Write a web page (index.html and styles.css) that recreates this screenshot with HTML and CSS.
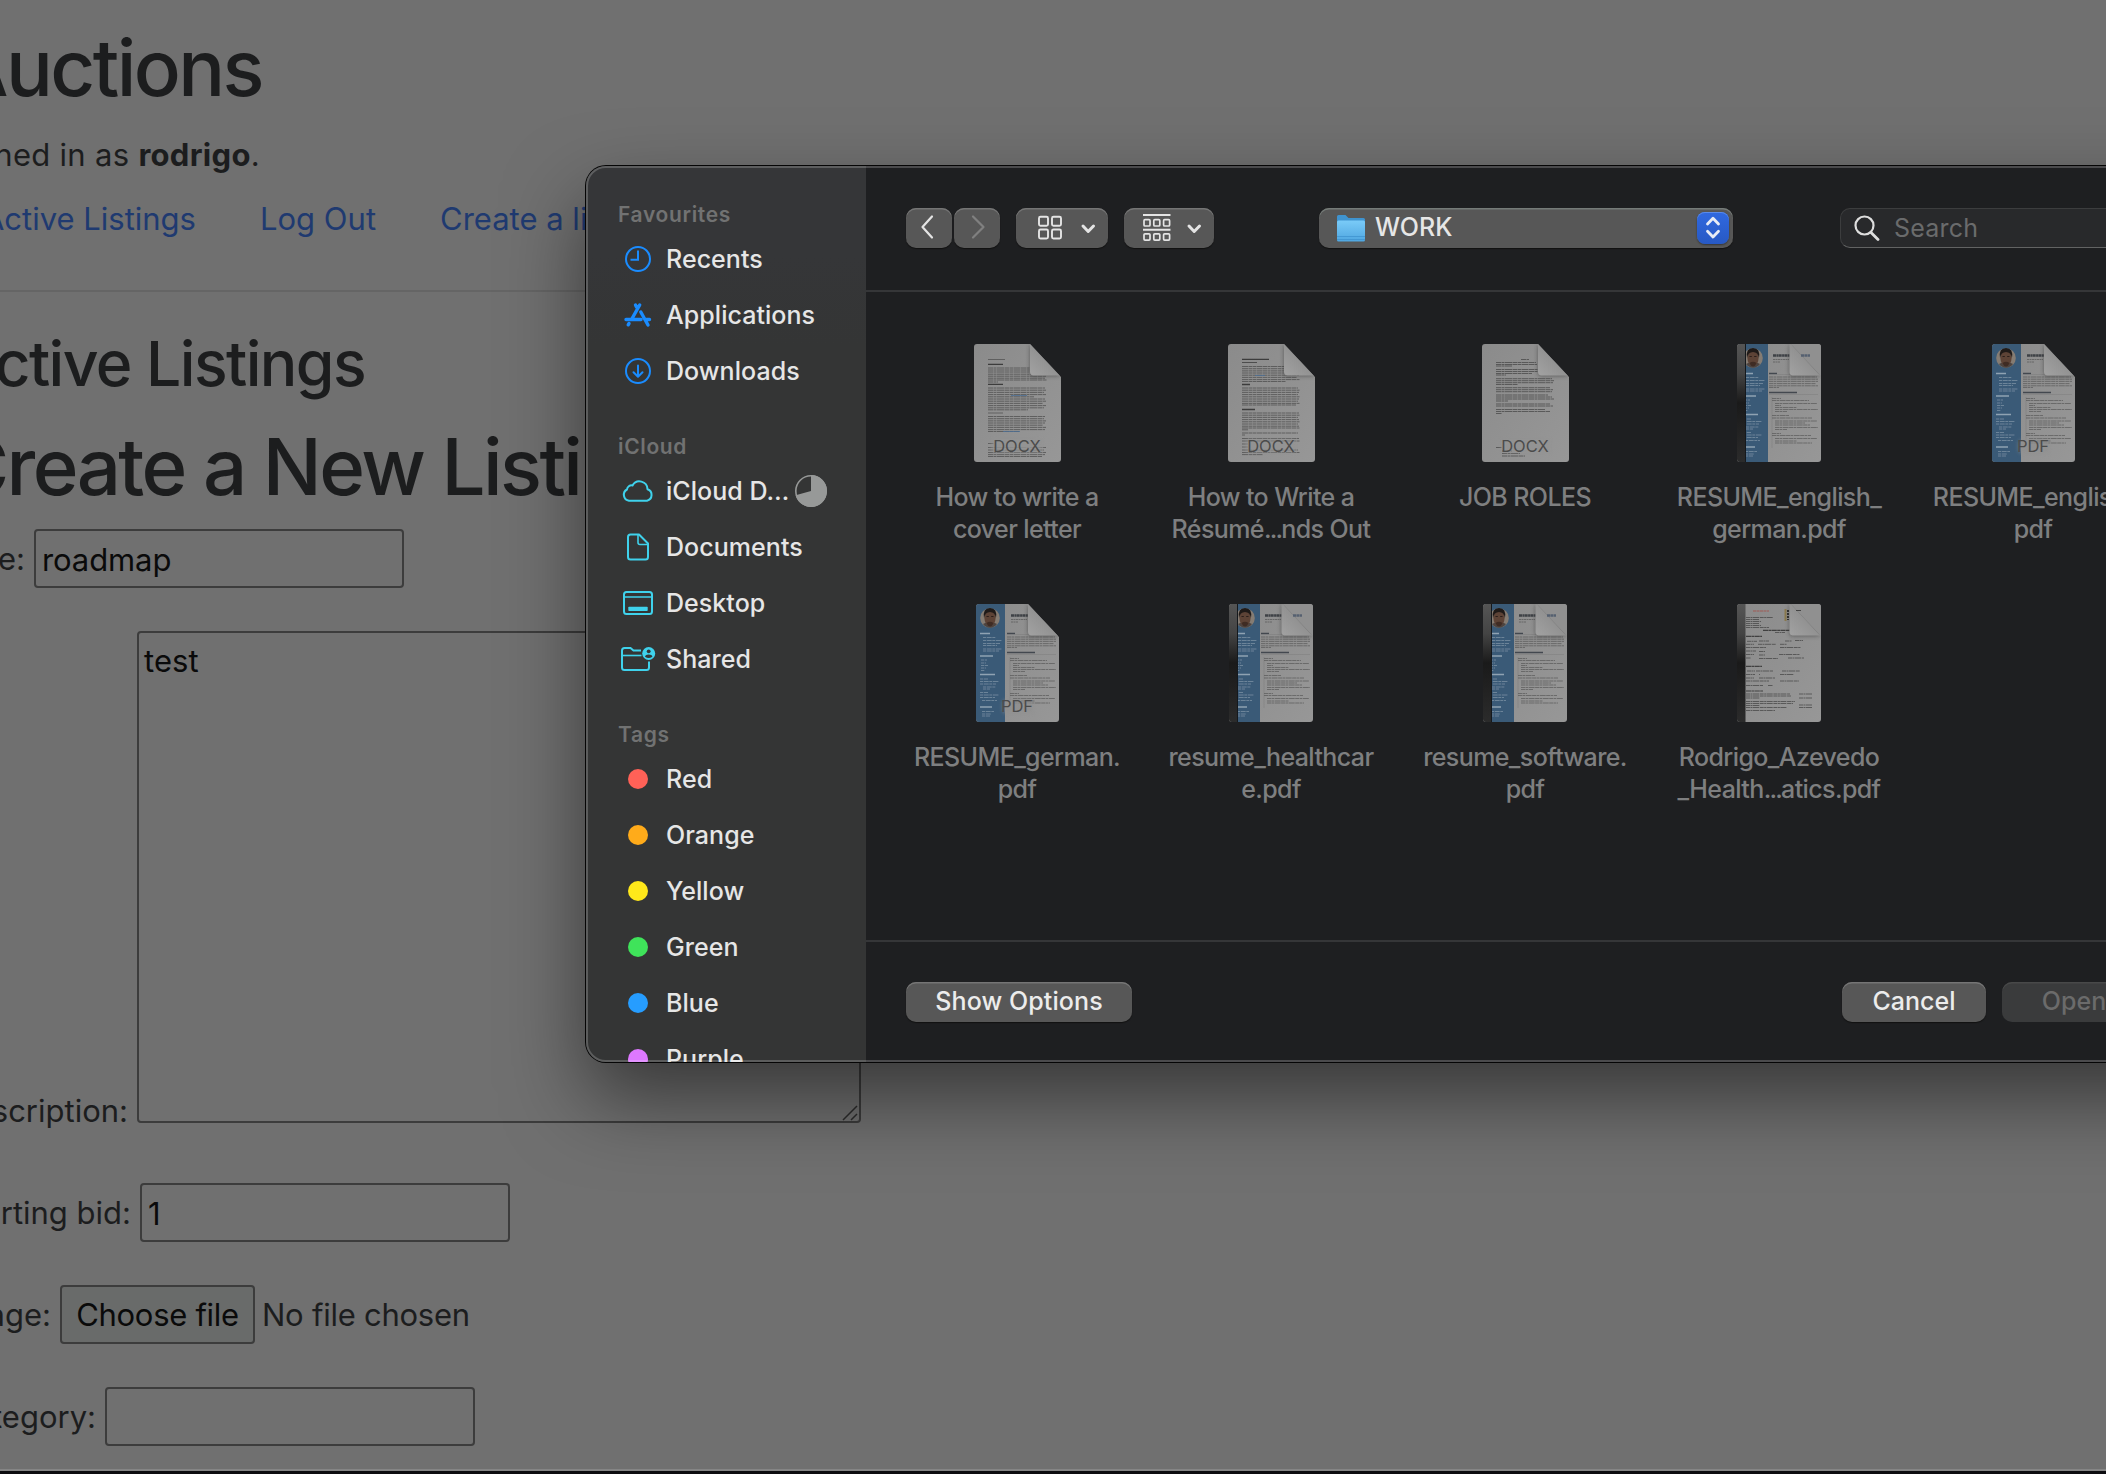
FILE: index.html
```html
<!DOCTYPE html>
<html lang="en">
<head>
<meta charset="utf-8">
<title>Auctions</title>
<link rel="stylesheet" href="styles.css">
</head>
<body>
<svg class="defs" aria-hidden="true">
  <defs>
    <linearGradient id="paper" x1="0" y1="0" x2="1" y2="1"><stop offset="0" stop-color="#8b8b8b"/><stop offset="1" stop-color="#979797"/></linearGradient>
    <linearGradient id="curl" x1="0" y1="1" x2="1" y2="0"><stop offset="0" stop-color="#a2a2a2"/><stop offset=".5" stop-color="#929292"/><stop offset="1" stop-color="#878787"/></linearGradient>
    <linearGradient id="spine" x1="0" y1="0" x2="0" y2="1"><stop offset="0" stop-color="#555"/><stop offset=".25" stop-color="#444"/><stop offset=".5" stop-color="#1a1a1a"/><stop offset="1" stop-color="#2b2b2b"/></linearGradient>
    <linearGradient id="folder" x1="0" y1="0" x2="0" y2="1"><stop offset="0" stop-color="#7acbf8"/><stop offset="1" stop-color="#4fa6e0"/></linearGradient>
    <filter id="soft" x="-30%" y="-30%" width="160%" height="160%"><feGaussianBlur stdDeviation="2"/></filter>
    <clipPath id="cut87"><path d="M3 0H56L87 33V115a3 3 0 0 1-3 3H3a3 3 0 0 1-3-3V3a3 3 0 0 1 3-3z"/></clipPath>
    <clipPath id="cut83"><path d="M3 0H52L83 33V115a3 3 0 0 1-3 3H3a3 3 0 0 1-3-3V3a3 3 0 0 1 3-3z"/></clipPath>
    <clipPath id="round84"><rect width="84" height="118" rx="3"/></clipPath>
  </defs>
  <symbol id="fold" viewBox="0 0 31 33" overflow="visible">
    <path d="M0 0V29q0 3 3 3H31z" fill="#333" opacity=".55" filter="url(#soft)"/>
    <path d="M0 0Q2 0 3 2L30 31Q31 32 29 31.500H3Q0 31 0 28z" fill="url(#curl)"/>
  </symbol>
  <symbol id="resume-side" viewBox="0 0 29 118">
    <rect width="29" height="118" fill="#3a5a77"/>
    <circle cx="14" cy="14" r="9.800" fill="#857c73"/>
    <path d="M7 20Q10 18 14 18T21 20Q18 23.800 14 23.800T7 20z" fill="#4c4441"/>
    <ellipse cx="14" cy="14" rx="5.600" ry="8" fill="#5d4336"/>
    <path d="M8 14Q6.500 4 14 4T20 14Q19 8 14 8T8 14z" fill="#1f1a18"/>
    <path d="M10.500 19Q14 16.500 17.500 19Q16 22.500 14 22.500T10.500 19" fill="#3f2c24"/>
    <path d="M10.500 12.500H12.800M15.200 12.500H17.500" stroke="#2b1f1a"/>
    <g stroke="#8fa2b2" fill="none">
      <path stroke-width="1.400" d="M4 29.500H14M4 52H17M4 70.500H19M4 103H16"/>
      <path stroke-width=".9" opacity=".65" stroke-dasharray="3 .7 5 .6" d="M7 33.500H20M7 36.500H26M7 39.500H24M7 41.500H21M7 45H26M7 47H23M5 56H11M5 59H10M5 61.500H12M5 64H10M5 66.500H9M4 75H12M4 77.500H23M4 80H20M7 83H20M7 85H14M4 88.500H12M4 91H23M4 93.500H19M6 96.500H21M6 107.500H18M6 110H15M6 112H14"/>
    </g>
  </symbol>
  <symbol id="resume-text" viewBox="0 0 54 118">
    <g fill="none">
      <path stroke="#3e4146" stroke-width="2.600" stroke-dasharray="3 .4 2 .3" d="M6 11.500H23"/>
      <path stroke="#666" stroke-width="1" stroke-dasharray="2 .5" d="M6 15.500H22M6 18H13"/>
      <path stroke="#43484f" stroke-width="1.500" d="M2 29.500H10M2 48.500H30"/>
      <path stroke="#777" stroke-width=".4" d="M10 30.500H51M2 50.500H51M5 53V104"/>
      <path stroke="#555" stroke-width="1" opacity=".65" stroke-dasharray="4 .5 2.500 .6 6 .5" d="M2 33H50M2 35.200H51M2 37.400H51M2 39.600H49M2 41.800H51M2 43.500H12M5 54.500H14M5 56.500H42M8 59.500H50M8 61.500H14M8 63.500H30M8 65.500H51M8 67.500H20M5 71.500H22M5 74H45M8 77H50M8 79H38M8 81H43M8 83.500H51M8 85.500H20M5 89.500H14M5 91.500H44M8 94.500H50M8 97H30M8 99H45"/>
    </g>
  </symbol>
  <symbol id="pdf" viewBox="0 0 83 118" overflow="visible">
    <g clip-path="url(#cut83)">
      <rect width="83" height="118" fill="url(#paper)"/>
      <use href="#resume-side" width="29" height="118"/>
      <use href="#resume-text" x="29" width="54" height="118"/>
      <rect x="27" y="96" width="30" height="13" rx="3" fill="#909090" opacity=".75" filter="url(#soft)"/>
      <use href="#fold" x="52" width="31" height="33"/>
    </g>
  </symbol>
  <symbol id="bound-resume" viewBox="0 0 84 118" overflow="visible">
    <g clip-path="url(#round84)">
      <rect width="84" height="118" fill="url(#paper)"/>
      <use href="#resume-side" x="2" width="29" height="118"/>
      <use href="#resume-text" x="30" width="54" height="118"/>
      <use href="#fold" x="52.500" width="31" height="33"/>
      <path d="M54 0H84V32z" fill="#909090"/>
      <path d="M64 11.500H73" stroke="#556070" stroke-width="2.400" stroke-dasharray="3 .4"/>
      <rect width="8.500" height="118" fill="url(#spine)"/>
      <path d="M8.500 0V118" stroke="#15191d"/>
    </g>
  </symbol>
  <symbol id="bound-form" viewBox="0 0 84 118" overflow="visible">
    <g clip-path="url(#round84)">
      <rect width="84" height="118" fill="url(#paper)"/>
      <path d="M16 7H32" stroke="#a05a55" stroke-width="1.200" stroke-dasharray="3 .5"/>
      <path d="M48.500 5V17" stroke="#8b7a4e" stroke-width="2"/><path d="M51 6V16" stroke="#333" stroke-width="2" stroke-dasharray="2 1"/>
      <g stroke="#333" fill="none">
        <path stroke-width="1.200" opacity=".85" stroke-dasharray="5 .4 3 .4" d="M26 26.300H53M9 32.300H25M9 62.300H25M9 87H26"/>
        <path stroke-width=".8" opacity=".75" stroke-dasharray="4 .5 2 .5 6 .7" d="M9 13.500H36M9 15.500H22M9 17.500H24M9 19.500H22M9 21.500H24M9 23.500H32M38 28.500H48M10 37.300H20M22 37H32M48 37H55M58 36.500H66M9 40.300H17M21 40.300H39M43 40.300H50M9 43.500H29M43 43.500H64M9 47H19M22 47.500H28M9 50.500H17M22 51H28M42 50.500H63M9 54H14M22 54.500H41M51 54H67M10 67H18M19 67H36M45 67H63M9 70.500H18M22 70.500H23M43 70.500H57M9 74H17M22 74H38M9 77H32M43 77H62M9 81.500H26M31 81.500H36M9 90H53M9 92H54M9 94H23M62 90H75M62 94H75M9 97.500H58M9 99.500H56M9 101.500H23M9 103.500H50M62 101H75M62 103.500H75M9 106.500H38"/>
      </g>
      <use href="#fold" x="52.500" width="31" height="33"/>
      <path d="M54 0H84V32z" fill="#909090"/><path d="M59 6.500H64" stroke="#444"/>
      <rect width="8.500" height="118" fill="url(#spine)"/>
    </g>
  </symbol>
  <symbol id="docx-a" viewBox="0 0 87 118" overflow="visible">
    <g clip-path="url(#cut87)">
      <rect width="87" height="118" fill="url(#paper)"/>
      <g stroke="#3c3c3c" fill="none">
        <path stroke-width=".8" opacity=".7" d="M14 15.500H31M14 69H29"/><path stroke-width="1.300" d="M14 20.300H29M14 40.300H29"/>
        <path stroke-width="1" opacity=".6" stroke-dasharray="5 .5 3 .5 7 .5" d="M14 24H56M14 26H72M14 28H73M14 30.200H70M14 32.200H72M14 34.200H71M14 36H73M14 38H24M14 44H71M14 46.200H72M14 48.400H70M14 50.600H72M14 52.800H60M14 55H71M14 57.200H72M14 59.400H69M14 61.600H72M14 63.800H70M14 65.800H54M14 72.500H71M14 74.700H70M14 76.900H72M14 79H71M14 81.200H69M14 83.400H72M14 85.600H71M14 87.500H45M14 99.500H20M14 103.500H72M14 106H70M14 108.500H72M14 110.600H71M14 112.500H68"/>
        <path stroke="#4c6e93" stroke-width="1" opacity=".8" d="M37 51.500H53M29 87.500H46"/>
      </g>
      <rect x="18" y="96" width="50" height="12" rx="3" fill="#939393" opacity=".85" filter="url(#soft)"/>
      <use href="#fold" x="56" width="31" height="33"/>
    </g>
  </symbol>
  <symbol id="docx-b" viewBox="0 0 87 118" overflow="visible">
    <g clip-path="url(#cut87)">
      <rect width="87" height="118" fill="url(#paper)"/>
      <g stroke="#3c3c3c" fill="none">
        <path stroke-width="1.300" d="M14 15.300H41M14 40.500H22M14 65.500H27"/><path stroke-width=".8" d="M14 18.500H29"/>
        <path stroke-width="1" opacity=".6" stroke-dasharray="6 .5 4 .5 3 .5" d="M14 22.500H56M14 24.700H71M14 26.900H70M14 29H72M14 31.200H71M14 33.400H69M14 35.600H72M14 37.500H58M14 44H70M14 46.200H72M14 48.400H71M14 50.600H70M14 52.800H72M14 55H71M14 57.200H70M14 59.400H72M14 61H68M14 69H71M14 71.200H72M14 73.400H70M14 75.600H71M14 77.800H72M14 80H70M14 82.200H71M14 84H72M14 85.800H20M14 89H70M14 91H17M14 94.500H71M14 97H72M14 100H20M14 103H20M14 106H70M14 108.500H72M14 110.600H35"/>
        <path stroke="#4c6e93" stroke-width="1" opacity=".8" d="M27 31.500H37"/>
      </g>
      <rect x="18" y="96" width="50" height="12" rx="3" fill="#939393" opacity=".85" filter="url(#soft)"/>
      <use href="#fold" x="56" width="31" height="33"/>
    </g>
  </symbol>
  <symbol id="docx-c" viewBox="0 0 87 118" overflow="visible">
    <g clip-path="url(#cut87)">
      <rect width="87" height="118" fill="url(#paper)"/>
      <g stroke="#3c3c3c" fill="none">
        <path stroke-width="1" opacity=".65" stroke-dasharray="5 .5 3 .5 7 .5" d="M39 15.500H47M14 18.500H54M14 20.500H55M14 22H30M14 25.500H56M14 27.500H72M14 29.500H50M14 31H24M14 34.700H70M14 36.700H72M14 38.700H71M14 40.500H36M14 43.700H68M14 45.700H71M14 47.700H70M14 51H66M14 53H70M14 55H72M14 57H26M14 60H68M14 62H71M14 65.500H63M14 67.500H68M14 69.500H20M14 103.500H20M20 107H30M20 109.500H38M20 112H43"/>
      </g>
      <rect x="20" y="96" width="48" height="12" rx="3" fill="#939393" opacity=".8" filter="url(#soft)"/>
      <use href="#fold" x="56" width="31" height="33"/>
    </g>
  </symbol>
</svg>

<main class="page">
  <h1 class="title brand">Auctions</h1>
  <div class="signed">Signed in as&nbsp;<strong>rodrigo</strong>.</div>
  <nav class="nav">
    <a class="nav-active">Active Listings</a>
    <a>Log Out</a>
    <a>Create a listing</a>
  </nav>
  <hr class="rule">
  <h2 class="subtitle">Active Listings</h2>
  <h1 class="title create">Create a New Listing</h1>
  <form class="form">
    <div class="row row-title"><label>Title:</label><input class="field" value="roadmap"></div>
    <div class="row row-desc"><label>Description:</label>
      <div class="area-wrap"><textarea class="area">test</textarea>
        <svg class="grip" width="16" height="16" viewBox="0 0 16 16"><path d="M1 15L15 1M9 15L15 9" stroke="#2c2c2c" stroke-width="1.500"/></svg>
      </div>
    </div>
    <div class="row row-bid"><label>Starting bid:</label><input class="field" value="1"></div>
    <div class="row row-image"><label>Image:</label><button type="button" class="choose">Choose file</button><span class="nofile">No file chosen</span></div>
    <div class="row row-cat"><label>Category:</label><input class="field" value=""></div>
  </form>
  <div class="window-edge"></div>
</main>

<section class="dialog">
  <aside class="sidebar">
    <h3 class="group">Favourites</h3>
    <div class="item"><svg class="ico" viewBox="-20 -20 40 40"><g fill="none" stroke="#1a8cff" stroke-width="2"><circle r="12"/><path d="M0 -8.500V.7H-7.500"/></g></svg>Recents</div>
    <div class="item"><svg class="ico" viewBox="-20 -20 40 40"><g fill="none" stroke="#1a8cff" stroke-width="3.400" stroke-linecap="round"><path d="M1.700 -10L-6.500 4.500M-2.500 -10L-1.500 -8M2.800 -3L10 10M-12 4.500H3M8.500 4.500H11.500M-9 8.500L-9.800 9.800"/></g></svg>Applications</div>
    <div class="item"><svg class="ico" viewBox="-20 -20 40 40"><g fill="none" stroke="#1a8cff" stroke-width="2" stroke-linecap="round" stroke-linejoin="round"><circle r="12"/><path d="M0 -5.500V5.500M-4.500 1.300L0 5.800L4.500 1.300"/></g></svg>Downloads</div>
    <h3 class="group">iCloud</h3>
    <div class="item"><svg class="ico" viewBox="-20 -20 40 40"><path d="M-9 9.700A6 6 0 0 1 -11 -1.500A4.500 4.500 0 0 1 -5.500 -5.500A8 8 0 0 1 9.500 -1.800A6 6 0 0 1 9 9.700Z" fill="none" stroke="#3fd2ec" stroke-width="2" stroke-linejoin="round"/></svg>iCloud D…<svg class="pie" viewBox="-16 -16 32 32"><circle r="15.200" fill="none" stroke="#979998" stroke-width="1.600"/><path d="M0 0V-16A16 16 0 1 1 -15.400 4.300Z" fill="#979998"/></svg></div>
    <div class="item"><svg class="ico" viewBox="-20 -20 40 40"><g fill="none" stroke="#3fd2ec" stroke-width="2" stroke-linejoin="round"><path d="M1 -12.500H-7.500a2.500 2.500 0 0 0 -2.500 2.500V10a2.500 2.500 0 0 0 2.500 2.500H7.500A2.500 2.500 0 0 0 10 10V-3.500Z"/><path d="M0 -12V-4.500a2 2 0 0 0 2 2H10" stroke-width="1.600"/></g></svg>Documents</div>
    <div class="item"><svg class="ico" viewBox="-20 -20 40 40"><g fill="none" stroke="#3fd2ec" stroke-width="2"><rect x="-14" y="-11" width="28" height="22" rx="2.500"/><path d="M-14 -6H14" stroke-width="1.500"/></g><rect x="-9.700" y="3.700" width="19.400" height="4.300" rx=".8" fill="#3fd2ec"/></svg>Desktop</div>
    <div class="item"><svg class="ico" viewBox="-20 -20 40 40"><g fill="none" stroke="#3fd2ec" stroke-width="2"><path d="M3 -8.500H-4.500L-7.500 -11H-13.500a2.500 2.500 0 0 0 -2.500 2.500V8.500a2.500 2.500 0 0 0 2.500 2.500H8.500A2.500 2.500 0 0 0 11 8.500V2.500"/><path d="M-16 -3.500H3.500" stroke-width="1.600"/></g><circle cx="10.700" cy="-5.500" r="6.500" fill="#3fd2ec"/><circle cx="10.700" cy="-7.700" r="1.900" fill="#343535"/><path d="M7 -2.200Q7.500 -4.600 10.700 -4.600T14.400 -2.200Q12.500 -1 10.700 -1T7 -2.200z" fill="#343535"/></svg>Shared</div>
    <h3 class="group">Tags</h3>
    <div class="item"><i class="dot red"></i>Red</div>
    <div class="item"><i class="dot orange"></i>Orange</div>
    <div class="item"><i class="dot yellow"></i>Yellow</div>
    <div class="item"><i class="dot green"></i>Green</div>
    <div class="item"><i class="dot blue"></i>Blue</div>
    <div class="item"><i class="dot purple"></i>Purple</div>
  </aside>
  <div class="main">
    <header class="toolbar">
      <button class="tool back"><svg width="46" height="40"><path d="M26 8.500L16.500 19L26 29.500" fill="none" stroke="#e4e4e4" stroke-width="2.200" stroke-linecap="round" stroke-linejoin="round"/></svg></button>
      <button class="tool forward"><svg width="46" height="40"><path d="M19 8.500L29.500 19L19 29.500" fill="none" stroke="#808080" stroke-width="2.200" stroke-linecap="round" stroke-linejoin="round"/></svg></button>
      <button class="tool view"><svg width="92" height="40"><g fill="none" stroke="#e4e4e4" stroke-width="1.900"><rect x="23" y="8.700" width="9" height="9" rx="1.500"/><rect x="36" y="8.700" width="9" height="9" rx="1.500"/><rect x="23" y="21.500" width="9" height="9" rx="1.500"/><rect x="36" y="21.500" width="9" height="9" rx="1.500"/></g><path d="M67 18L72.200 23.500L77.500 18" fill="none" stroke="#e4e4e4" stroke-width="3" stroke-linecap="round" stroke-linejoin="round"/></svg></button>
      <button class="tool arrange"><svg width="90" height="40"><g fill="none" stroke="#e4e4e4" stroke-width="1.700"><path d="M19 7H46.500M19 21.700H46.500" stroke-width="1.900"/><rect x="20" y="11.700" width="6" height="6.300" rx="1"/><rect x="29.800" y="11.700" width="6" height="6.300" rx="1"/><rect x="39.600" y="11.700" width="6" height="6.300" rx="1"/><rect x="20" y="25.800" width="6" height="6.300" rx="1"/><rect x="29.800" y="25.800" width="6" height="6.300" rx="1"/><rect x="39.600" y="25.800" width="6" height="6.300" rx="1"/></g><path d="M65 18L70.200 23.500L75.500 18" fill="none" stroke="#e4e4e4" stroke-width="3" stroke-linecap="round" stroke-linejoin="round"/></svg></button>
      <div class="popup">
        <svg class="folder" width="28" height="27" viewBox="0 0 28 27"><path d="M0 1.500Q0 0 1.500 0H8.500L11.500 3H26.500Q28 3 28 4.500V10H0z" fill="#3f93cf"/><rect y="5.500" width="28" height="21" rx="1.500" fill="url(#folder)"/><path d="M0 21.500H28M0 24.500H28" stroke="#3f93cf" stroke-width=".8"/></svg>
        <span class="popup-name">WORK</span>
        <span class="stepper"><svg width="32" height="32"><path d="M10.500 12L16 6.300L21.500 12M10.500 19.300L16 25L21.500 19.300" fill="none" stroke="#e8ecf5" stroke-width="2.800" stroke-linecap="round" stroke-linejoin="round"/></svg></span>
      </div>
      <div class="search"><svg width="26" height="26"><circle cx="10.500" cy="10.500" r="9" fill="none" stroke="#dedede" stroke-width="2.200"/><path d="M17 17.500L24 24.500" stroke="#dedede" stroke-width="2.800" stroke-linecap="round"/></svg>Search</div>
    </header>
    <div class="files">
      <figure class="file"><svg class="thumb docx"><use href="#docx-a"/></svg><span class="kind">DOCX</span><figcaption>How to write a<br>cover letter</figcaption></figure>
      <figure class="file"><svg class="thumb docx"><use href="#docx-b"/></svg><span class="kind">DOCX</span><figcaption>How to Write a<br>Résumé<span class="dots">...</span>nds Out</figcaption></figure>
      <figure class="file"><svg class="thumb docx"><use href="#docx-c"/></svg><span class="kind">DOCX</span><figcaption>JOB ROLES</figcaption></figure>
      <figure class="file"><svg class="thumb bound"><use href="#bound-resume"/></svg><figcaption>RESUME_english_<br>german.pdf</figcaption></figure>
      <figure class="file"><svg class="thumb pdf"><use href="#pdf"/></svg><span class="kind">PDF</span><figcaption>RESUME_english.<br>pdf</figcaption></figure>
      <figure class="file"><svg class="thumb pdf"><use href="#pdf"/></svg><span class="kind">PDF</span><figcaption>RESUME_german.<br>pdf</figcaption></figure>
      <figure class="file"><svg class="thumb bound"><use href="#bound-resume"/></svg><figcaption>resume_healthcar<br>e.pdf</figcaption></figure>
      <figure class="file"><svg class="thumb bound"><use href="#bound-resume"/></svg><figcaption>resume_software.<br>pdf</figcaption></figure>
      <figure class="file"><svg class="thumb bound"><use href="#bound-form"/></svg><figcaption>Rodrigo_Azevedo<br>_Health<span class="dots">...</span>atics.pdf</figcaption></figure>
    </div>
    <footer class="actions">
      <button class="tool options">Show Options</button>
      <button class="tool cancel">Cancel</button>
      <button class="tool open">Open</button>
    </footer>
  </div>
</section>
</body>
</html>
```
FILE: styles.css
```css
* { box-sizing: border-box; }

body {
  margin: 0;
  width: 2106px;
  height: 1474px;
  overflow: hidden;
  position: relative;
  background: #707070;
  color: #1c1d1e;
  font: 400 31px/48px Inter, "Liberation Sans", sans-serif;
}

.defs { position: absolute; width: 0; height: 0; }

/* Page behind the dialog */
.page {
  height: 1474px;
  margin-left: -120px;
  padding-top: 20px;
  display: flex;
  flex-direction: column;
  white-space: nowrap;
}

.title { margin: 0; font-size: 78px; line-height: 96px; font-weight: 540; letter-spacing: -2.6px; }
.brand { display: flex; justify-content: flex-end; width: 382px; }
.signed { display: flex; justify-content: flex-end; width: 380px; margin-top: 15px; letter-spacing: .3px; }
.signed strong { font-weight: 700; letter-spacing: .3px; }

.nav { display: flex; gap: 64px; margin-top: 16px; color: #1f3a70; }
.nav-active { width: 316px; display: flex; justify-content: flex-end; }

.rule { width: 100%; height: 2px; margin: 47px 0 0; border: 0; background: #656565; }
.subtitle {
  display: flex;
  justify-content: flex-end;
  width: 485px;
  margin: 33px 0 0;
  font-size: 62.500px;
  line-height: 76px;
  font-weight: 540;
  letter-spacing: -1.6px;
}
.create { margin: 18px 0 0 72px; }

.form { display: flex; flex-direction: column; margin-top: 14px; gap: 43px; }
.row { display: flex; align-items: center; height: 59px; }
.row label { display: flex; justify-content: flex-end; flex: none; padding-top: 1px; margin-right: 9px; }
.row-title label { width: 145px; }
.row-desc label { width: 248px; margin-bottom: -12px; }
.row-bid label { width: 251px; }
.row-image label { width: 171px; }
.row-cat label { width: 216px; }
.row-desc { height: 492px; align-items: flex-end; margin-bottom: 17px; }

.field, .area, .choose {
  border: 2px solid #3c3c3c;
  border-radius: 4px;
  background: transparent;
  color: #0a0a0a;
  font: inherit;
}
.field { width: 370px; height: 59px; padding: 1px 6px 0; outline: 0; letter-spacing: -0.1px; }
.area-wrap { position: relative; width: 724px; height: 492px; }
.area { display: block; width: 724px; height: 492px; padding: 4px 5px; resize: none; outline: 0; letter-spacing: .1px; }
.grip { position: absolute; right: 3px; bottom: 2px; }
.choose { width: 195px; height: 59px; padding: 0; background: #696b6a; letter-spacing: -0.3px; }
.nofile { margin-left: 7px; padding-top: 1px; letter-spacing: -0.25px; }

.window-edge { margin-top: auto; height: 5px; background: #0c0c10; border-top: 2px solid #858585; flex: none; }

/* Open-file dialog */
.dialog {
  position: absolute;
  left: 586px;
  top: 166px;
  width: 1700px;
  height: 896px;
  display: flex;
  border-radius: 20px;
  box-shadow: 0 0 0 1px #050505, 0 36px 80px rgba(0, 0, 0, .5);
  background: #1e1f21;
  color: #e6e6e6;
  font-size: 25px;
}
.dialog::after {
  content: "";
  position: absolute;
  inset: 0;
  border: 2px solid rgba(255, 255, 255, .2);
  border-radius: 20px;
}

.sidebar {
  flex: none;
  width: 280px;
  overflow: hidden;
  border-radius: 20px 0 0 20px;
  background: linear-gradient(#353638 0, #353638 90px, #343535 180px);
  padding-top: 1px;
}
.group {
  display: flex;
  align-items: flex-end;
  height: 64px;
  margin: 0;
  padding: 0 0 2px 32px;
  color: #717272;
  font-size: 21px;
  line-height: 28px;
  font-weight: 600;
  letter-spacing: .65px;
}
.item { display: flex; align-items: center; height: 56px; padding: 0 0 1px 32px; font-weight: 500; letter-spacing: .05px; }
.ico { width: 40px; height: 40px; margin-right: 8px; }
.pie { width: 32px; height: 32px; margin-left: 6px; }
.dot { width: 20px; height: 20px; margin: 0 18px 0 10px; border-radius: 50%; }
.red { background: #ff6157; }
.orange { background: #ffab1a; }
.yellow { background: #ffe81a; }
.green { background: #3fe35a; }
.blue { background: #269dff; }
.purple { background: #dd78ff; }

.main { flex: 1; display: flex; flex-direction: column; }
.toolbar { display: flex; height: 126px; padding: 42px 0 0 40px; border-bottom: 2px solid #353638; }
.tool {
  height: 40px;
  padding: 0;
  border: 0;
  border-radius: 10px;
  background: #575757;
  box-shadow: inset 0 1.500px 0 #757575, 0 1px 1px #111;
  color: #ececec;
  font: 500 25px/38px Inter, "Liberation Sans", sans-serif;
}
.tool svg { display: block; }
.back, .forward { width: 46px; }
.back { margin-right: 2px; }
.view { width: 92px; margin: 0 16px; }
.arrange { width: 90px; }
.popup {
  display: flex;
  align-items: center;
  width: 414px;
  height: 40px;
  margin-left: 105px;
  padding: 0 4px 0 18px;
  border-radius: 10px;
  background: #575757;
  box-shadow: inset 0 1.500px 0 #757b78, 0 1px 1px #111;
}
.popup-name { flex: 1; margin: -2px 0 0 10px; font-weight: 500; letter-spacing: 0; }
.stepper {
  width: 32px;
  height: 32px;
  border-radius: 8px;
  background: linear-gradient(#3069e0, #2759c4);
  box-shadow: inset 0 1px 0 #5a8bea, 0 1px 2px rgba(0, 0, 0, .4);
}
.stepper svg { display: block; }
.search {
  display: flex;
  align-items: center;
  gap: 14px;
  width: 400px;
  height: 40px;
  margin-left: 107px;
  padding-left: 13px;
  border: 1px solid #3c3d3e;
  border-bottom-color: #626363;
  border-radius: 10px;
  background: #28292b;
  color: #6a6b6c;
  letter-spacing: .2px;
}

.files { display: grid; grid-template-columns: repeat(5, 254px); grid-auto-rows: 260px; height: 648px; padding: 52px 0 0 24px; }
.file { display: flex; flex-direction: column; align-items: center; margin: 0; }
.thumb { height: 118px; overflow: visible; }
.docx { width: 87px; }
.pdf { width: 83px; }
.bound { width: 84px; }
.kind { margin: -26px 0 6px; font-size: 16.500px; line-height: 20px; color: #4b4b4b; }
.file figcaption { margin-top: 19px; color: #7e7f80; line-height: 32px; text-align: center; font-weight: 450; letter-spacing: -0.6px; white-space: nowrap; }
.dots { letter-spacing: -1.8px; }

.actions { display: flex; height: 122px; padding: 40px 0 0 40px; border-top: 2px solid #353638; }
.options { width: 226px; letter-spacing: .1px; }
.actions .tool { line-height: 37px; padding-bottom: 1px; }
.cancel { width: 144px; margin: 0 16px 0 710px; }
.open { width: 144px; background: #3a3b3c; box-shadow: inset 0 1.500px 0 #484949; color: #6b6b6b; }
```
